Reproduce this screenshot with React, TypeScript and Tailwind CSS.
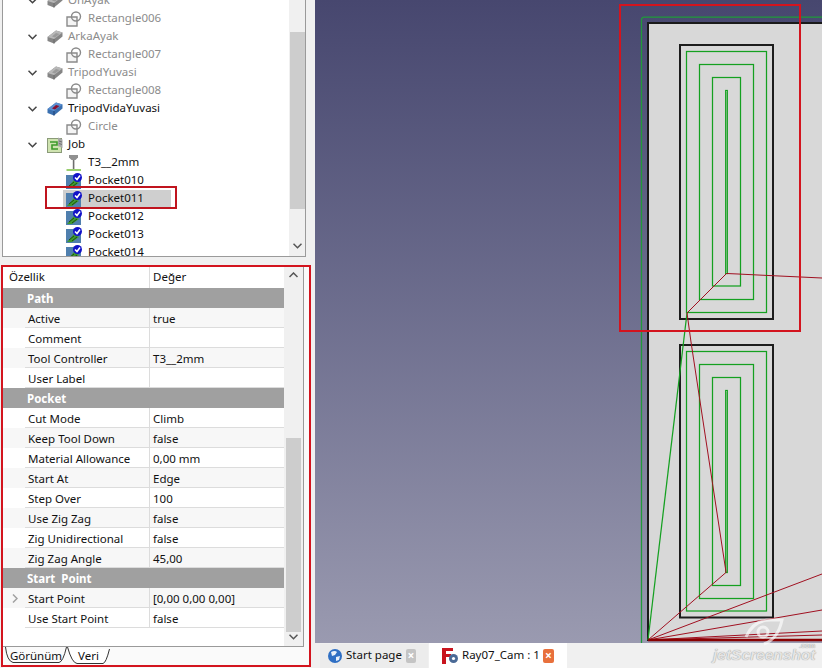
import React from "react";

const FONT = "font-['Noto_Sans',sans-serif]";

const CubeIcon = ({ colored }: { colored?: boolean }) => (
  <svg width="16" height="14" viewBox="0 0 16 14" className="shrink-0">
    <path d="M0.5 7 L9 0.5 L15.5 2.5 L15.5 6.5 L7 13.5 L0.5 11 Z" fill={colored ? "#3a70b0" : "#858585"} />
    <path d="M0.5 7 L9 0.5 L15.5 2.5 L7 9 Z" fill={colored ? "#5b8fd0" : "#b8b8b8"} />
    <path d="M5 6.5 L9 3 L12.5 4 L8 7.5 Z" fill={colored ? "#8a1030" : "#9a9a9a"} />
    <path d="M7 9 L7 13.5" stroke={colored ? "#1f3f70" : "#6a6a6a"} strokeWidth="1" />
  </svg>
);

const SketchIcon = () => (
  <svg width="16" height="16" viewBox="0 0 16 16" className="shrink-0" fill="none" stroke="#8a8a8a" strokeWidth="1.4">
    <path d="M1 6 H11 V15 H1 Z" fill="#f4f4f4" />
    <circle cx="10" cy="5.5" r="4.5" />
  </svg>
);

const JobIcon = () => (
  <svg width="16" height="16" viewBox="0 0 16 16" className="shrink-0">
    <rect x="0.5" y="1.5" width="14" height="14" fill="#cfe3b0" stroke="#8a9a78" />
    <path d="M3 5 H10 V8 H5 V12 H11" fill="none" stroke="#3d9a2a" strokeWidth="1.6" />
    <path d="M11 0.5 L15.5 2.5 V11 L11 9 Z" fill="#a8a8a8" />
    <path d="M12 4 L15 5 M12 6.5 L15 7.5" stroke="#666" strokeWidth="0.8" />
  </svg>
);

const ToolIcon = () => (
  <svg width="16" height="18" viewBox="0 0 16 18" className="shrink-0">
    <path d="M3 1 H12 V3.5 L9.5 6 H5.5 L3 3.5 Z" fill="#909090" />
    <path d="M6.8 6 H8.4 V15 H6.8 Z" fill="#6e6e6e" />
    <path d="M0.5 16 H15" stroke="#7fc24a" strokeWidth="1.6" />
  </svg>
);

const PocketIcon = () => (
  <svg width="16" height="16" viewBox="0 0 16 16" className="shrink-0">
    <rect x="0" y="2" width="15" height="14" fill="#4f7fae" />
    <path d="M1 15 L8 7 L13 10 L6 15 Z" fill="#3f9a2e" />
    <path d="M3 13 L8 9 M6 14 L11 10" stroke="#1d4d12" strokeWidth="1" />
    <circle cx="11.5" cy="4.5" r="4.5" fill="#1212c8" />
    <path d="M9 4.5 L11 6.5 L14 2.5" fill="none" stroke="#fff" strokeWidth="1.6" />
  </svg>
);

const Chevron = () => (
  <svg width="9" height="6" viewBox="0 0 9 6" className="shrink-0" fill="none" stroke="#444" strokeWidth="1.5">
    <path d="M0.5 0.8 L4.5 4.8 L8.5 0.8" />
  </svg>
);

type TreeRow = { label: string; kind: "cube" | "blue" | "sketch" | "job" | "tool" | "pocket"; dim?: boolean; sel?: boolean };

const treeRows: TreeRow[] = [
  { label: "OnAyak", kind: "cube", dim: true },
  { label: "Rectangle006", kind: "sketch", dim: true },
  { label: "ArkaAyak", kind: "cube", dim: true },
  { label: "Rectangle007", kind: "sketch", dim: true },
  { label: "TripodYuvasi", kind: "cube", dim: true },
  { label: "Rectangle008", kind: "sketch", dim: true },
  { label: "TripodVidaYuvasi", kind: "blue" },
  { label: "Circle", kind: "sketch", dim: true },
  { label: "Job", kind: "job" },
  { label: "T3__2mm", kind: "tool" },
  { label: "Pocket010", kind: "pocket" },
  { label: "Pocket011", kind: "pocket", sel: true },
  { label: "Pocket012", kind: "pocket" },
  { label: "Pocket013", kind: "pocket" },
  { label: "Pocket014", kind: "pocket" },
];

const TreeItem = ({ row }: { row: TreeRow }) => {
  const parent = row.kind === "cube" || row.kind === "blue" || row.kind === "job";
  return (
    <div className={`flex h-[18px] items-center ${parent ? "pl-[25px]" : "pl-[60px]"}`}>
      {parent && (
        <div className="mr-[10px] flex w-[9px] justify-center">
          <Chevron />
        </div>
      )}
      <div className={`flex h-[18px] items-center ${parent ? "gap-[5px]" : "gap-[6px] pl-[3px]"} ${row.sel ? "w-[108px] bg-[#cfcfcf]" : ""}`}>
        {row.kind === "cube" && <CubeIcon />}
        {row.kind === "blue" && <CubeIcon colored />}
        {row.kind === "sketch" && <SketchIcon />}
        {row.kind === "job" && <JobIcon />}
        {row.kind === "tool" && <ToolIcon />}
        {row.kind === "pocket" && <PocketIcon />}
        <span className={`pb-[2px] text-[11.5px] whitespace-nowrap ${row.dim ? "text-[#8c8c8c]" : "text-[#111]"}`}>{row.label}</span>
      </div>
    </div>
  );
};

type PropRow = { group?: boolean; name: string; value?: string; expand?: boolean };

const propRows: PropRow[] = [
  { group: true, name: "Path" },
  { name: "Active", value: "true" },
  { name: "Comment", value: "" },
  { name: "Tool Controller", value: "T3__2mm" },
  { name: "User Label", value: "" },
  { group: true, name: "Pocket" },
  { name: "Cut Mode", value: "Climb" },
  { name: "Keep Tool Down", value: "false" },
  { name: "Material Allowance", value: "0,00 mm" },
  { name: "Start At", value: "Edge" },
  { name: "Step Over", value: "100" },
  { name: "Use Zig Zag", value: "false" },
  { name: "Zig Unidirectional", value: "false" },
  { name: "Zig Zag Angle", value: "45,00" },
  { group: true, name: "Start  Point" },
  { name: "Start Point", value: "[0,00 0,00 0,00]", expand: true },
  { name: "Use Start Point", value: "false" },
];

const PropItem = ({ row, index }: { row: PropRow; index: number }) => {
  if (row.group) {
    return (
      <div className="flex h-[20px] items-center bg-[#a0a0a0] pt-[1px] pl-[24px] text-[11.5px] font-bold whitespace-pre text-white">
        {row.name}
      </div>
    );
  }
  const alt = index % 2 === 1;
  return (
    <div className={`flex h-[20px] text-[11.5px] text-[#111] ${alt ? "bg-[#f7f7f7]" : "bg-white"}`}>
      <div className="flex w-[22px] items-center justify-center pl-[2px]">
        {row.expand && (
          <svg width="6" height="9" viewBox="0 0 6 9" fill="none" stroke="#a0a0a0" strokeWidth="1.5">
            <path d="M1 0.5 L5 4.5 L1 8.5" />
          </svg>
        )}
      </div>
      <div className="flex w-[124px] items-center border-b border-[#dcdcdc] pt-[2px] pl-[3px]">{row.name}</div>
      <div className="flex flex-1 items-center border-b border-l border-[#dcdcdc] pt-[2px] pl-[3px]">{row.value}</div>
    </div>
  );
};

const Viewport = () => (
  <svg viewBox="315 0 507 643" width="507" height="643" className="block" fill="none">
    <path d="M641.5 643 V20 Q641.5 17 644 17 H822" stroke="#1f9a3a" strokeWidth="1.25" />
    <rect x="648" y="23" width="180" height="617" fill="#d8d8d8" stroke="#1a1a1a" strokeWidth="2" />
    {[
      [680, 45, 93, 274],
      [680, 345, 93, 272.5],
    ].map(([x, y, w, h]) => (
      <rect key={y} x={x} y={y} width={w} height={h} stroke="#1c1c1c" strokeWidth="2" />
    ))}
    <g stroke="#14a020" strokeWidth="1.25">
      <rect x="686.5" y="51.5" width="80" height="261" />
      <rect x="699.5" y="64.5" width="54" height="235" />
      <rect x="712.5" y="77.5" width="28" height="208.5" />
      <rect x="725.7" y="90.5" width="1.6" height="183" />
      <rect x="686.5" y="351.5" width="80" height="259.5" />
      <rect x="699.5" y="364.5" width="54" height="234" />
      <rect x="712.5" y="377.5" width="28" height="208" />
      <rect x="725.7" y="390.5" width="1.6" height="182" />
      <path d="M687 313 L648 640" />
    </g>
    <g stroke="#a01020" strokeWidth="1">
      <path d="M726.5 273.5 L738 274 L758 275 L822 278" />
      <path d="M726.5 273.5 L687 313" />
      <path d="M687 313 L691 342 L726 572" />
      <path d="M726.5 572 L648 640" />
      <path d="M648 640 L822 574" />
      <path d="M648 640 L822 610" />
      <path d="M648 640 L822 631" />
      <path d="M648 640 L822 635" />
    </g>
    <path d="M648 640 H822" stroke="#8a0000" strokeWidth="2.5" />
    <rect x="620" y="5" width="180" height="326" stroke="#d3141e" strokeWidth="2" />
  </svg>
);

const BookTab = ({ label, width, d, active }: { label: string; width: number; d: string; active?: boolean }) => (
  <div className="relative flex h-[18px] items-center justify-center text-[11.5px] whitespace-nowrap text-[#111]" style={{ width }}>
    <svg width={width} height="18" viewBox={`0 0 ${width} 18`} fill="none" stroke="#333" strokeWidth="1" className="absolute top-0 left-0">
      <path d={d} fill={active ? "#ffffff" : "none"} />
    </svg>
    <span className="relative">{label}</span>
  </div>
);

export default function App() {
  return (
    <div className={`relative flex h-[668px] w-[822px] overflow-hidden bg-[#f0f0f0] ${FONT}`}>
      <div className="flex w-[315px] shrink-0 flex-col">
        <div className="ml-[2px] flex h-[257px] w-[304px] border-r border-b border-l border-[#9a9a9a] bg-white">
          <div className="mt-[-8px] flex-1 overflow-hidden">
            {treeRows.map((r) => (
              <TreeItem key={r.label} row={r} />
            ))}
          </div>
          <div className="relative flex w-[16px] flex-col items-center justify-end bg-[#f0f0f0] pb-[7px]">
            <div className="absolute top-[32px] h-[177px] w-[15px] bg-[#cdcdcd]" />
            <svg width="9" height="6" viewBox="0 0 9 6" fill="none" stroke="#555" strokeWidth="1.5">
              <path d="M0.5 0.8 L4.5 4.8 L8.5 0.8" />
            </svg>
          </div>
        </div>
        <div className="mt-[9px] mr-[6px] ml-[3px] flex flex-1 flex-col bg-[#fafafa]">
          <div className="flex h-[381px] w-[301px] border-r border-b border-[#9a9a9a] bg-white">
            <div className="flex w-[281px] flex-col">
              <div className="flex h-[22px] text-[11.5px] text-[#111]">
                <div className="flex w-[146px] items-center pl-[6px]">Özellik</div>
                <div className="flex flex-1 items-center border-l border-[#dcdcdc] pl-[3px]">Değer</div>
              </div>
              {propRows.map((r, i) => (
                <PropItem key={r.name} row={r} index={i} />
              ))}
            </div>
            <div className="relative flex flex-1 flex-col items-center justify-between bg-[#f0f0f0] py-[6px]">
              <svg width="9" height="6" viewBox="0 0 9 6" fill="none" stroke="#555" strokeWidth="1.5">
                <path d="M0.5 5 L4.5 1 L8.5 5" />
              </svg>
              <div className="absolute top-[172px] h-[194px] w-[15px] bg-[#cdcdcd]" />
              <svg width="9" height="6" viewBox="0 0 9 6" fill="none" stroke="#555" strokeWidth="1.5">
                <path d="M0.5 0.8 L4.5 4.8 L8.5 0.8" />
              </svg>
            </div>
          </div>
          <div className="ml-[2px] flex">
            <BookTab label="Görünüm" width={62} d="M0.5 0 Q2 14 8 15.5 H54 Q58 15 61.5 0" />
            <BookTab label="Veri" width={43} active d="M0.5 0 Q5 16 10 16.5 H36 Q39 16 42.5 2" />
          </div>
        </div>
      </div>

      <div className="flex flex-1 flex-col">
        <div className="h-[643px] bg-gradient-to-b from-[#47476f] to-[#9a9ab0]">
          <Viewport />
        </div>
        <div className="flex h-[25px] pl-[5px] text-[11.5px] whitespace-nowrap text-[#111]">
          <div className="mt-[1px] flex w-[108px] items-center gap-[4px] bg-[#ececec] pl-[8px]">
            <svg width="14" height="14" viewBox="0 0 14 14" className="shrink-0">
              <circle cx="7" cy="7" r="7" fill="#2f6fc4" />
              <path d="M3 3 Q7 1 9 3 L7 6 L4 7 Z M8 8 L12 7 L11 11 L8 12 Z" fill="#e8f0fa" />
            </svg>
            <span className="pb-[2px]">Start page</span>
            <span className="mr-[12px] ml-auto flex h-[14px] w-[14px] items-center justify-center rounded-[2px] bg-[#c4c4c4] text-[12px] leading-none font-bold text-white">×</span>
          </div>
          <div className="ml-[1px] flex w-[138px] items-center gap-[3px] bg-white pl-[13px]">
            <svg width="17" height="16" viewBox="0 0 17 16" className="shrink-0">
              <path d="M0 0 H11 V3 H4 V6 H9 V9 H4 V16 H0 Z" fill="#c8141e" />
              <circle cx="11.5" cy="10.5" r="4.5" fill="#4a6a96" />
              <circle cx="11.5" cy="10.5" r="1.6" fill="#fff" />
            </svg>
            <span className="pb-[2px]">Ray07_Cam : 1</span>
            <span className="mr-[13px] ml-auto flex h-[14px] w-[14px] items-center justify-center rounded-[2px] bg-[#e8703c] text-[12px] leading-none font-bold text-white">×</span>
          </div>
        </div>
      </div>

      <div className="pointer-events-none absolute top-[265px] left-[1px] h-[402px] w-[310px] border-2 border-[#d3141e]" />
      <div className="pointer-events-none absolute top-[186px] left-[45px] h-[23px] w-[132px] border-2 border-[#c0141e]" />
      <div className="pointer-events-none absolute top-[649px] left-[713px] font-['Liberation_Sans',sans-serif] text-[15.5px] leading-[12px] font-bold text-[#e4e4e4] italic [text-shadow:0_0_1px_#808080]">jetScreenshot</div>
      <div className="pointer-events-none absolute top-[642px] left-[799px] font-['Liberation_Sans',sans-serif] text-[7px] leading-[7px] font-bold text-[#e4e4e4] [text-shadow:0_0_1px_#808080]">.com</div>
      <svg width="44" height="30" viewBox="0 0 44 30" fill="none" stroke="#ffffff" strokeOpacity="0.65" strokeWidth="3" className="pointer-events-none absolute top-[617px] left-[742px]">
        <circle cx="21" cy="15" r="5" />
        <path d="M4 20 Q12 2 30 3 L40 3 Q36 22 22 27" />
      </svg>
    </div>
  );
}
